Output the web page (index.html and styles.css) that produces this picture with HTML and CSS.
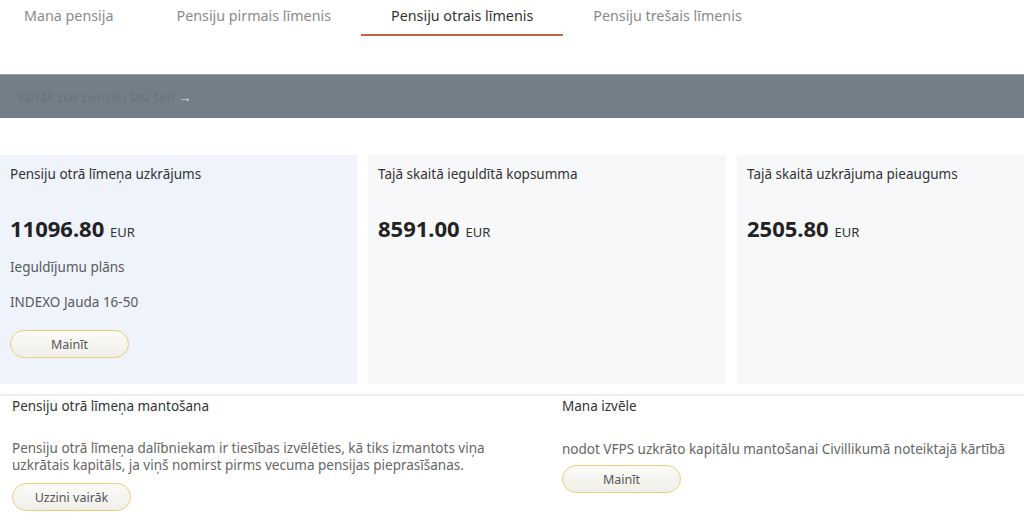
FILE: index.html
```html
<!DOCTYPE html>
<html lang="lv">
<head>
    <meta charset="UTF-8">
    <meta name="viewport" content="width=device-width, initial-scale=1.0">
    <title>Pensiju otrais līmenis</title>
    <link rel="stylesheet" href="styles.css">
</head>
<body>

<!-- Tabs -->
<nav class="tabs">
    <a class="tab first">Mana pensija</a>
    <a class="tab">Pensiju pirmais līmenis</a>
    <a class="tab active">Pensiju otrais līmenis</a>
    <a class="tab">Pensiju trešais līmenis</a>
</nav>

<!-- Banner -->
<div class="banner">
    <a class="banner-link">Vairāk par pensiju lasi šeit <span class="arrow">&rarr;</span></a>
</div>

<!-- Summary cards -->
<div class="cards">
    <div class="card card-main">
        <div class="card-title">Pensiju otrā līmeņa uzkrājums</div>
        <div class="amount">11096.80 <span class="currency">EUR</span></div>
        <div class="card-label">Ieguldījumu plāns</div>
        <div class="card-plan">INDEXO Jauda 16-50</div>
        <button class="pill-btn">Mainīt</button>
    </div>
    <div class="card">
        <div class="card-title">Tajā skaitā ieguldītā kopsumma</div>
        <div class="amount">8591.00 <span class="currency">EUR</span></div>
    </div>
    <div class="card card-last">
        <div class="card-title">Tajā skaitā uzkrājuma pieaugums</div>
        <div class="amount">2505.80 <span class="currency">EUR</span></div>
    </div>
</div>

<!-- Inheritance -->
<div class="inherit">
    <div class="inherit-col left">
        <div class="inherit-title">Pensiju otrā līmeņa mantošana</div>
        <p class="inherit-text">Pensiju otrā līmeņa dalībniekam ir tiesības izvēlēties, kā tiks izmantots viņa uzkrātais kapitāls, ja viņš nomirst pirms vecuma pensijas pieprasīšanas.</p>
        <button class="pill-btn">Uzzini vairāk</button>
    </div>
    <div class="inherit-col right">
        <div class="inherit-title">Mana izvēle</div>
        <p class="inherit-text">nodot VFPS uzkrāto kapitālu mantošanai Civillikumā noteiktajā kārtībā</p>
        <button class="pill-btn">Mainīt</button>
    </div>
</div>

</body>
</html>
```

FILE: styles.css
```css
body {
    font-family: "Noto Sans", "Open Sans", sans-serif;
    background-color: #fff;
    color: #333;
    margin: 0;
    padding: 0;
}

/* Tabs */
.tabs {
    display: flex;
    height: 36px;
}

.tab {
    padding: 6px 30px 0;
    font-size: 14.3px;
    line-height: 20px;
    color: #8a8a8a;
    box-sizing: border-box;
    height: 36px;
    border-bottom: 2px solid transparent;
    white-space: nowrap;
}

.tab.first {
    padding-left: 24px;
    padding-right: 33px;
}

.tab.active {
    color: #333;
    border-bottom-color: #c4643f;
}

/* Banner */
.banner {
    margin-top: 38px;
    height: 44px;
    background-color: #747e87;
    border-top: 1px solid #9aa2a9;
    box-sizing: border-box;
    display: flex;
    align-items: center;
    padding-left: 17px;
}

.banner-link {
    font-size: 13px;
    color: #68727b;
}

.banner-link .arrow {
    color: #e4e7ea;
}

/* Cards */
.cards {
    display: flex;
    gap: 11px;
    margin-top: 37px;
    padding-bottom: 10px;
    border-bottom: 2px solid #eceef0;
}

.card {
    flex: none;
    width: 358px;
    height: 229px;
    box-sizing: border-box;
    padding: 10px;
    background-color: #f7f8f9;
}

.card-main {
    width: 357px;
    background-color: #eef3fc;
}

.card-last {
    flex: 1;
    width: auto;
}

.card-title {
    font-size: 13.5px;
    line-height: 18px;
    color: #333;
}

.amount {
    margin-top: 31px;
    font-size: 22px;
    line-height: 28px;
    font-weight: bold;
    color: #222;
}

.currency {
    font-size: 13px;
    font-weight: normal;
    color: #333;
}

.card-label, .card-plan {
    font-size: 13.5px;
    line-height: 18px;
    color: #5a5a5a;
}

.card-label {
    margin-top: 12px;
}

.card-plan {
    margin-top: 17px;
}

.pill-btn {
    display: block;
    width: 119px;
    height: 28px;
    padding: 0;
    font-family: inherit;
    font-size: 12.5px;
    color: #555;
    background: linear-gradient(#fbfaf6, #f1efea);
    border: 1px solid #e6d07c;
    border-radius: 14px;
    cursor: pointer;
}

.card .pill-btn {
    margin-top: 19px;
}

/* Inheritance */
.inherit {
    display: flex;
}

.inherit-col {
    box-sizing: border-box;
    padding-top: 1px;
}

.inherit-col.left {
    width: 550px;
    padding-left: 12px;
    padding-right: 30px;
}

.inherit-col.right {
    padding-left: 12px;
}

.inherit-title {
    font-size: 13.5px;
    line-height: 18px;
    color: #333;
}

.inherit-text {
    font-size: 13.5px;
    line-height: 17px;
    color: #666;
    margin: 25px 0 9px;
}

.right .inherit-text {
    margin: 26px 0 7px;
}
```
